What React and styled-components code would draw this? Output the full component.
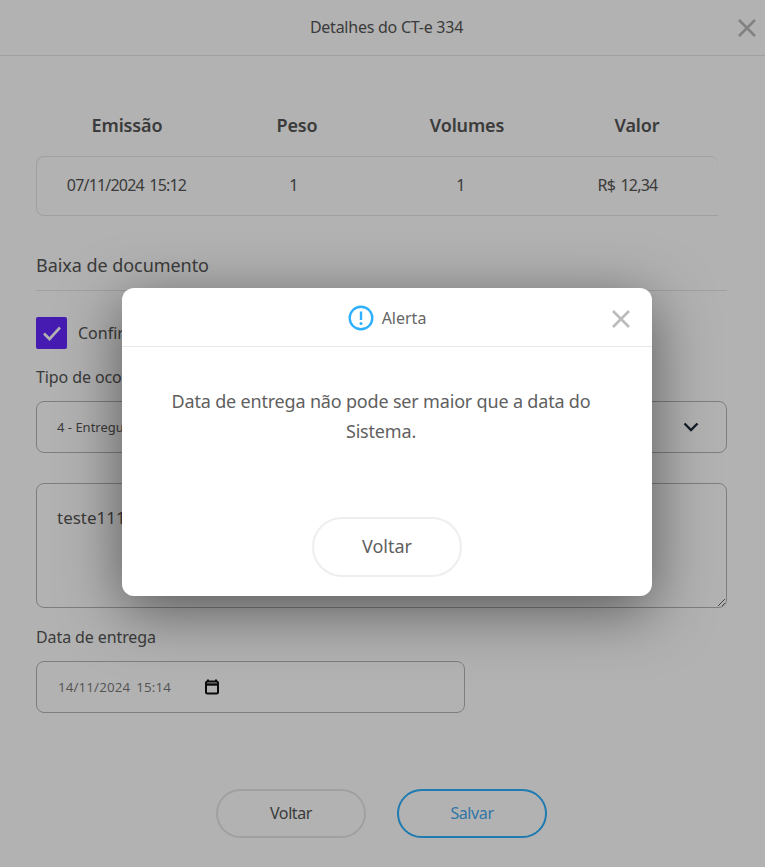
import React from 'react';
import styled, { createGlobalStyle } from 'styled-components';

const GlobalStyle = createGlobalStyle`
  html, body { margin: 0; padding: 0; background: #fff; }
  body { font-family: "Noto Sans", "Open Sans", sans-serif; color: #555; overflow: hidden; }
  * { box-sizing: border-box; }
`;

const Page = styled.div`
  position: relative;
  width: 765px;
  height: 867px;
  overflow: hidden;
`;

const Header = styled.header`
  height: 56px;
  border-bottom: 1px solid #e6e6e6;
  display: flex;
  align-items: center;
  justify-content: center;
  position: relative;
`;

const Title = styled.h1`
  margin: 0 0 2px 8px;
  font-size: 16px;
  font-weight: 400;
  letter-spacing: -0.25px;
  color: #555;
`;

const CloseButton = styled.button`
  position: absolute;
  top: ${p => p.$top}px;
  right: ${p => p.$right}px;
  padding: 0;
  width: 18px;
  height: 18px;
  border: 0;
  background: none;
  color: #bbb;
  display: flex;
`;

const Content = styled.main`
  padding: 59px 38px 0 36px;
`;

const SummaryHead = styled.div`
  display: grid;
  grid-template-columns: repeat(4, 170px);
  padding-left: 6px;
  margin-bottom: 20px;
`;

const HeadCell = styled.div`
  height: 21px;
  line-height: 21px;
  text-align: center;
  font-size: 18px;
  font-weight: 600;
  letter-spacing: -0.15px;
  color: #555;
`;

const SummaryRow = styled.div`
  display: grid;
  grid-template-columns: repeat(4, 167px);
  width: 682px;
  height: 60px;
  align-items: center;
  border: 1px solid #e6e6e6;
  border-right: 0;
  border-radius: 8px 8px 0 8px;
  padding: 0 0 2px 6px;
`;

const ValueCell = styled.div`
  text-align: center;
  font-size: 16px;
  letter-spacing: -0.8px;
  word-spacing: 2px;
  color: #555;
`;

const SectionTitle = styled.h2`
  margin: 38px 0 0;
  height: 37px;
  line-height: 22px;
  font-size: 18px;
  font-weight: 400;
  letter-spacing: -0.05px;
  color: #555;
  border-bottom: 1px solid #e6e6e6;
`;

const CheckRow = styled.div`
  display: flex;
  align-items: center;
  gap: 11px;
  margin-top: 26px;
`;

const CheckBox = styled.span`
  width: 31px;
  height: 32px;
  border-radius: 2px;
  background: #6428ff;
  display: flex;
  align-items: center;
  justify-content: center;
  color: #fff;
`;

const CheckLabel = styled.span`
  font-size: 16px;
  color: #555;
`;

const Label = styled.label`
  display: block;
  margin-top: ${p => p.$top}px;
  margin-bottom: ${p => p.$bottom}px;
  height: 24px;
  line-height: 24px;
  font-size: 16px;
  font-weight: 400;
  letter-spacing: -0.1px;
  color: #555;
`;

const SelectBox = styled.div`
  height: 52px;
  border: 1px solid #b5b5b5;
  border-radius: 8px;
  display: flex;
  align-items: center;
  justify-content: space-between;
  padding: 0 27px 0 20px;
  font-size: 13px;
  color: #555;
`;

const Notes = styled.textarea`
  display: block;
  width: 100%;
  height: 125px;
  margin-top: 30px;
  padding: 22px 20px;
  border: 1px solid #b5b5b5;
  border-radius: 8px;
  background: transparent;
  font: 400 17px "Noto Sans", sans-serif;
  color: #555;
  outline: none;
`;

const DateBox = styled.div`
  width: 429px;
  height: 52px;
  border: 1px solid #b5b5b5;
  border-radius: 8px;
  display: flex;
  align-items: center;
  padding: 0 0 1px 21px;
  font-family: "Open Sans", sans-serif;
  font-size: 13.33px;
  letter-spacing: 0.15px;
  color: #777;
`;

const DatePart = styled.span`
  margin-right: ${p => p.$gap}px;
`;

const Actions = styled.div`
  display: flex;
  justify-content: center;
  gap: 31px;
  margin-top: 76px;
`;

const PillButton = styled.button`
  width: 150px;
  height: 49px;
  border-radius: 25px;
  border: 2px solid ${p => (p.$primary ? '#2eb0ff' : '#e6e6e6')};
  background: transparent;
  color: ${p => (p.$primary ? '#45aaf0' : '#555')};
  font-family: "Noto Sans", sans-serif;
  font-size: 16px;
  letter-spacing: -0.4px;
  padding-bottom: 3px;
`;

const Overlay = styled.div`
  position: absolute;
  inset: 0;
  background: rgba(0, 0, 0, 0.3);
  padding: 288px 0 0 122px;
`;

const Modal = styled.section`
  width: 530px;
  height: 308px;
  background: #fff;
  border-radius: 12px;
  box-shadow: 0 14px 60px rgba(0, 0, 0, 0.5);
  position: relative;
`;

const ModalHeader = styled.div`
  height: 59px;
  padding-top: 2px;
  border-bottom: 1px solid #e8e8e8;
  display: flex;
  align-items: center;
  justify-content: center;
  gap: 8px;
`;

const ModalTitle = styled.span`
  font-size: 16px;
  color: #666;
`;

const ModalText = styled.p`
  margin: 39px 0 0 39px;
  width: 440px;
  text-align: center;
  font-size: 18px;
  line-height: 30px;
  letter-spacing: -0.18px;
  color: #5f5f5f;
  height: 124px;
`;

const ModalActions = styled.div`
  display: flex;
  justify-content: center;
  margin-top: 7px;
`;

const ModalButton = styled.button`
  width: 150px;
  height: 60px;
  border-radius: 30px;
  border: 2px solid #eee;
  background: #fff;
  color: #5f5f5f;
  font-family: "Noto Sans", sans-serif;
  font-size: 18px;
  padding-bottom: 3px;
`;

const CrossIcon = () => (
  <svg width="18" height="18" viewBox="0 0 18 18" fill="none" stroke="currentColor" strokeWidth="2.6">
    <path d="M1 1 L17 17 M17 1 L1 17" />
  </svg>
);

const App = () => (
  <Page>
    <GlobalStyle />
    <Header>
      <Title>Detalhes do CT-e 334</Title>
      <CloseButton $top={19} $right={9}><CrossIcon /></CloseButton>
    </Header>
    <Content>
      <SummaryHead>
        <HeadCell>Emissão</HeadCell>
        <HeadCell>Peso</HeadCell>
        <HeadCell>Volumes</HeadCell>
        <HeadCell>Valor</HeadCell>
      </SummaryHead>
      <SummaryRow>
        <ValueCell>07/11/2024 15:12</ValueCell>
        <ValueCell>1</ValueCell>
        <ValueCell>1</ValueCell>
        <ValueCell>R$ 12,34</ValueCell>
      </SummaryRow>
      <SectionTitle>Baixa de documento</SectionTitle>
      <CheckRow>
        <CheckBox>
          <svg width="20" height="16" viewBox="0 0 20 16" fill="none" stroke="currentColor" strokeWidth="2.6">
            <path d="M2 8.5 L7.5 14 L18 2.5" />
          </svg>
        </CheckBox>
        <CheckLabel>Confirmar entrega</CheckLabel>
      </CheckRow>
      <Label $top={16} $bottom={12}>Tipo de ocorrência</Label>
      <SelectBox>
        <span>4 - Entregue</span>
        <svg width="16" height="10" viewBox="0 0 16 10" fill="none" stroke="#1b2a3a" strokeWidth="2.4">
          <path d="M1.5 1.5 L8 8 L14.5 1.5" />
        </svg>
      </SelectBox>
      <Notes readOnly defaultValue="teste111" />
      <Label $top={17} $bottom={12}>Data de entrega</Label>
      <DateBox>
        <DatePart $gap={6}>14/11/2024</DatePart>
        <DatePart $gap={34}>15:14</DatePart>
        <svg width="14" height="16" viewBox="0 0 14 16" fill="none">
          <path d="M3 0.5 V3 M11 0.5 V3" stroke="#111" strokeWidth="2" />
          <rect x="1" y="2.5" width="12" height="12" rx="1.5" stroke="#111" strokeWidth="2" />
          <path d="M1 5.5 H13" stroke="#111" strokeWidth="2.4" />
        </svg>
      </DateBox>
      <Actions>
        <PillButton>Voltar</PillButton>
        <PillButton $primary>Salvar</PillButton>
      </Actions>
    </Content>
    <Overlay>
      <Modal>
        <ModalHeader>
          <svg width="26" height="26" viewBox="0 0 26 26" fill="none">
            <circle cx="13" cy="13" r="11.3" stroke="#2eb0ff" strokeWidth="2.4" />
            <path d="M13 6.5 V15" stroke="#2eb0ff" strokeWidth="2.4" />
            <circle cx="13" cy="18.6" r="1.5" fill="#2eb0ff" />
          </svg>
          <ModalTitle>Alerta</ModalTitle>
        </ModalHeader>
        <CloseButton $top={22} $right={22}><CrossIcon /></CloseButton>
        <ModalText>Data de entrega não pode ser maior que a data do Sistema.</ModalText>
        <ModalActions>
          <ModalButton>Voltar</ModalButton>
        </ModalActions>
      </Modal>
    </Overlay>
  </Page>
);

export default App;
